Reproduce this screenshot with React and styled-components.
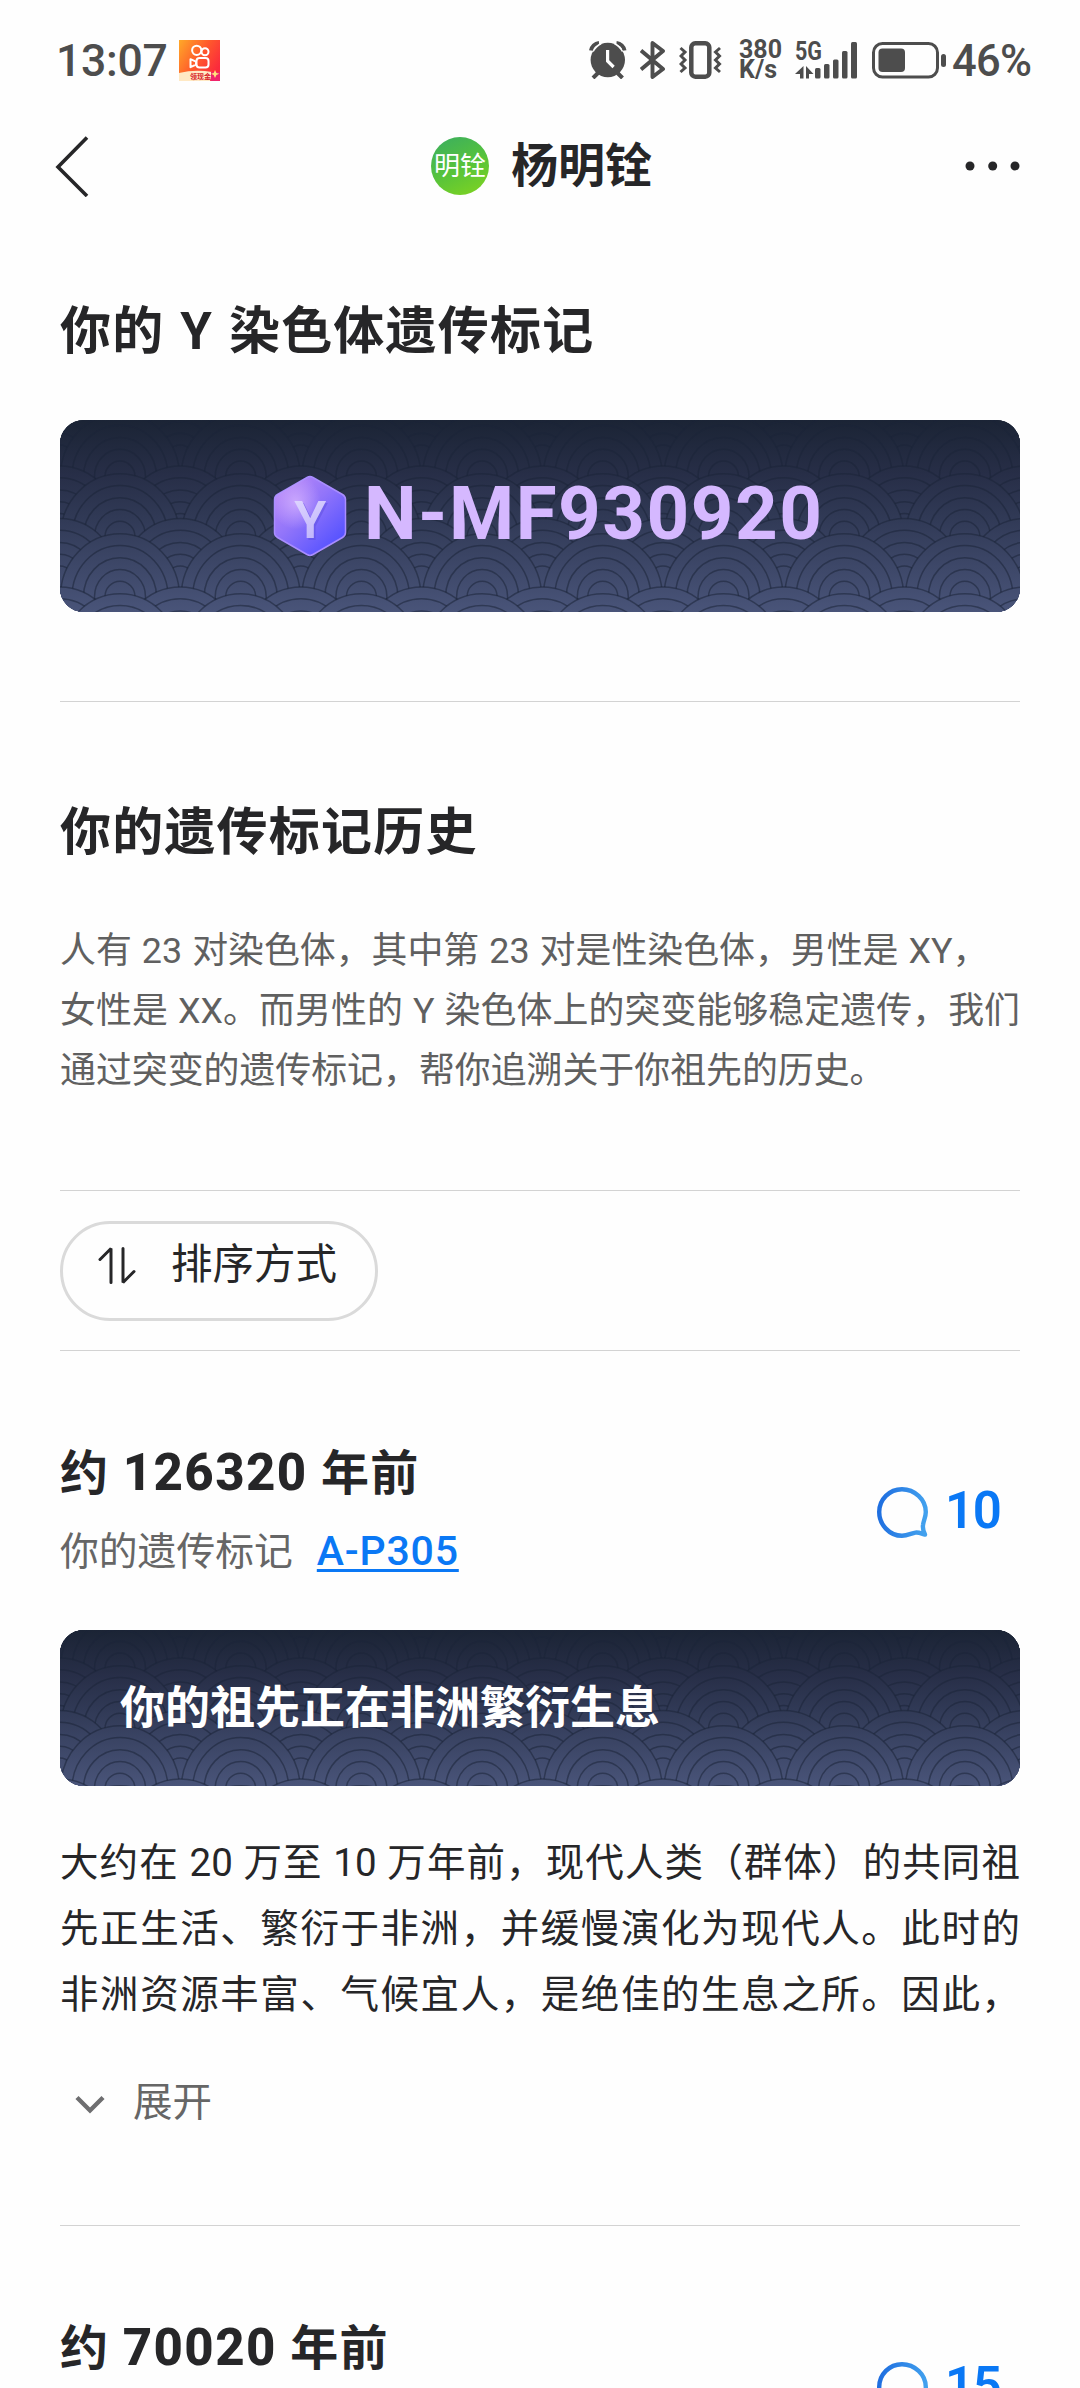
import React from 'react';
import styled, { createGlobalStyle } from 'styled-components';

const GlobalStyle = createGlobalStyle`
  * {
    box-sizing: border-box;
  }
  body {
    margin: 0;
    background: #fefefe;
    color: #262628;
    font-family: Roboto, "Noto Sans CJK SC", sans-serif;
  }
  svg {
    display: block;
    flex: none;
  }
`;

/* ---------- icons ---------- */

const KuaishouIcon = () => (
    <svg width="41" height="41" viewBox="0 0 41 41">
        <defs>
            <linearGradient id="ks" x1="0" y1="0" x2="1" y2="0.6">
                <stop offset="0" stopColor="#ffa928" />
                <stop offset="0.55" stopColor="#ff5a2c" />
                <stop offset="1" stopColor="#fb2a3c" />
            </linearGradient>
        </defs>
        <rect width="41" height="41" fill="url(#ks)" />
        <g fill="none" stroke="#fff" strokeWidth="2">
            <circle cx="17.7" cy="10.3" r="4.6" />
            <circle cx="26" cy="11.7" r="3.5" />
            <rect x="17.5" y="18" width="12" height="9.6" rx="3" />
            <path d="M11.5 19.2v8l5.5-2.6v-3z" strokeLinejoin="round" />
        </g>
        <path d="M0 33q16-4 33-1l-2 9H0z" fill="#ffe9c4" />
        <path d="M32 32h9v9h-9z" fill="#f0246c" />
        <path d="M36 30l1.4 3 3 .8-3 1.2-1.4 3-1.3-3-2.7-1.2 2.7-.8z" fill="#ffe27a" />
        <text x="11" y="39.3" fontSize="7" fontWeight="700" fill="#d8232a">领现金</text>
    </svg>
);

const AlarmIcon = () => (
    <svg width="38" height="38" viewBox="0 0 38 38">
        <circle cx="18.8" cy="19" r="17.2" fill="#4d4d4d" />
        <path d="M9 32l-5 5M28.500 32l5 5" stroke="#4d4d4d" strokeWidth="4" />
        <path d="M2 9.500a9 9 0 0 1 8-7.500M35.500 9.500a9 9 0 0 0-8-7.500" fill="none" stroke="#4d4d4d" strokeWidth="4" />
        <path d="M4.200 10.500a18 18 0 0 1 8-8M33.400 10.500a18 18 0 0 0-8-8" fill="none" stroke="#fefefe" strokeWidth="1.500" />
        <path d="M18.600 9v11l6 6" fill="none" stroke="#fefefe" strokeWidth="3.200" />
    </svg>
);

const BluetoothIcon = () => (
    <svg width="26" height="38" viewBox="0 0 26 38">
        <path d="M1 9.500L23 28 12.500 36V2L23 10 1 28.500" fill="none" stroke="#4d4d4d" strokeWidth="3.900" strokeLinejoin="round" />
    </svg>
);

const VibrateIcon = () => (
    <svg width="43" height="38" viewBox="0 0 43 38">
        <rect x="12.300" y="2.300" width="18" height="33.400" rx="4" fill="none" stroke="#4d4d4d" strokeWidth="4.500" />
        <path d="M1.500 7l4.500 4-4 4 4 4-4 4 4 4-4.500 4M41 7l-4.500 4 4 4-4 4 4 4-4 4 4.500 4" fill="none" stroke="#4d4d4d" strokeWidth="3" />
    </svg>
);

const SignalIcon = () => (
    <svg width="64" height="40" viewBox="0 0 64 40" overflow="visible">
        <text x="0" y="19.500" fontSize="25" fontWeight="700" fill="#4d4d4d" textLength="27" lengthAdjust="spacingAndGlyphs">5G</text>
        <g fill="#4d4d4d">
            <path d="M8.500 26v12.500H5V34H0zM11 26v12.500h3V34h4.500z" />
            <rect x="20" y="28" width="5.500" height="10.500" rx="1.500" />
            <rect x="29" y="24" width="5.500" height="14.500" rx="1.500" />
            <rect x="38" y="19.500" width="5.500" height="19" rx="1.500" />
            <rect x="47" y="11" width="5.500" height="27.500" rx="1.500" />
            <rect x="56" y="2" width="6" height="36.500" rx="1.500" />
        </g>
    </svg>
);

const BatteryIcon = () => (
    <svg width="75" height="37" viewBox="0 0 75 37">
        <rect x="1.500" y="1.500" width="64" height="33.500" rx="9" fill="none" stroke="#4d4d4d" strokeWidth="3" />
        <rect x="6.500" y="6.500" width="26.500" height="23.500" rx="4" fill="#4d4d4d" />
        <rect x="69" y="12" width="5" height="13" rx="2.500" fill="#4d4d4d" />
    </svg>
);

const BackIcon = () => (
    <svg width="40" height="62" viewBox="0 0 40 62">
        <path d="M33 2.500L4 32l29 29" fill="none" stroke="#262628" strokeWidth="3.600" />
    </svg>
);

const MoreIcon = () => (
    <svg width="60" height="12" viewBox="0 0 60 12">
        <circle cx="10" cy="6" r="4.500" fill="#262628" />
        <circle cx="32.700" cy="6" r="4.500" fill="#262628" />
        <circle cx="55" cy="6" r="4.500" fill="#262628" />
    </svg>
);

const SortIcon = () => (
    <svg width="38" height="38" viewBox="0 0 38 38">
        <path d="M2 13.500L13 2.500v34M25 2.500v34l11-11" fill="none" stroke="#262628" strokeWidth="3" strokeLinecap="round" strokeLinejoin="bevel" />
    </svg>
);

const CommentIcon = ({ id }) => (
    <svg width="54" height="54" viewBox="0 0 54 54">
        <defs>
            <linearGradient id={id} x1="0" y1="0.4" x2="1" y2="0.5">
                <stop offset="0" stopColor="#1f6fe0" />
                <stop offset="1" stopColor="#42a1ee" />
            </linearGradient>
        </defs>
        <path
            d="M26 3.200C13.400 3.200 3.200 13.400 3.200 26S13.400 49.800 26 49.800c5.500 0 9.500-2.600 13.500-3.200 3.500-.4 6.500 1.200 9.500 2-1.500-3-2.500-6-2-9.500.5-4.500 2.800-8 2.800-13.100C49.800 13.400 38.600 3.200 26 3.200z"
            fill="none"
            stroke={`url(#${id})`}
            strokeWidth="4.400"
            strokeLinejoin="round"
        />
    </svg>
);

const ChevronIcon = () => (
    <svg width="30" height="20" viewBox="0 0 30 20">
        <path d="M2 2.500l13 13 13-13" fill="none" stroke="#6e6e70" strokeWidth="4.400" />
    </svg>
);

const HexagonIcon = () => (
    <svg width="88" height="96" viewBox="0 0 88 96">
        <defs>
            <linearGradient id="hex" x1="0.1" y1="0.1" x2="0.8" y2="0.9">
                <stop offset="0" stopColor="#b787f8" />
                <stop offset="0.45" stopColor="#9275fa" />
                <stop offset="1" stopColor="#5753ff" />
            </linearGradient>
            <radialGradient id="shine" cx="0.3" cy="0.32" r="0.35">
                <stop offset="0" stopColor="#d3b0ff" stopOpacity="0.8" />
                <stop offset="1" stopColor="#d3b0ff" stopOpacity="0" />
            </radialGradient>
            <linearGradient id="letter" x1="0" y1="0" x2="0.3" y2="1">
                <stop offset="0" stopColor="#e4dbff" />
                <stop offset="1" stopColor="#bdb2fb" />
            </linearGradient>
        </defs>
        <path d="M41 9.500q3-1.800 6 0l29.500 17q3 1.800 3 5v33q0 3.200-3 5l-29.500 17q-3 1.800-6 0l-29.500-17q-3-1.800-3-5v-33q0-3.200 3-5z" fill="url(#hex)" stroke="#a98dff" strokeWidth="1.500" />
        <path d="M41 9.500q3-1.800 6 0l29.500 17q3 1.800 3 5v33q0 3.200-3 5l-29.500 17q-3 1.800-6 0l-29.500-17q-3-1.800-3-5v-33q0-3.200 3-5z" fill="url(#shine)" />
        <text x="46" y="71.500" textAnchor="middle" fontSize="52" fontWeight="600" fill="#5d4fe0" opacity="0.5">Y</text>
        <text x="44.300" y="69.500" textAnchor="middle" fontSize="52" fontWeight="600" fill="url(#letter)">Y</text>
    </svg>
);

/* ---------- wave pattern ---------- */

// The pattern is anchored to the middle of the card, rows go from back to front
const rows = [
    { top: -22.500, odd: true },
    { top: -6.500, odd: false },
    { top: 46, odd: true },
    { top: 53.700, odd: false },
    { top: 98.500, odd: true },
    { top: 113.700, odd: false },
    { top: 167, odd: true },
    { top: 173.700, odd: false },
];

const rings = [
    [59.500, 63],
    [48, 51.300],
    [36.500, 39],
    [25.500, 27.200],
    [15, 15.400],
];

const WavePattern = ({ id, height }) => {
    const shift = (height - 192) / 2;
    return (
        <WaveSvg width="960" height={height} viewBox={`0 0 960 ${height}`}>
            <defs>
                <linearGradient id={id} gradientUnits="userSpaceOnUse" x1="0" y1="0" x2="0" y2={height}>
                    <stop offset="0" stopColor="#1b2435" />
                    <stop offset="0.28" stopColor="#272e47" />
                    <stop offset="0.5" stopColor="#303955" />
                    <stop offset="1" stopColor="#495479" />
                </linearGradient>
            </defs>
            <rect width="960" height={height} fill={`url(#${id})`} />
            {rows.map((row) =>
                Array.from({ length: 10 }, (_, i) => {
                    const cx = (row.odd ? -0.500 : -60.700) + i * 120.700;
                    return rings.map(([rx, ry], n) => (
                        <ellipse
                            key={`${row.top}-${i}-${n}`}
                            cx={cx}
                            cy={row.top + shift + 63}
                            rx={rx}
                            ry={ry}
                            fill={`url(#${id})`}
                            stroke="#1c2438"
                            strokeOpacity="0.55"
                            strokeWidth="1.500"
                        />
                    ));
                })
            )}
        </WaveSvg>
    );
};

/* ---------- page ---------- */

const intro = [
    { text: '人有 23 对染色体，其中第 23 对是性染色体，男性是 XY，' },
    { text: '女性是 XX。而男性的 Y 染色体上的突变能够稳定遗传，我们', justify: true },
    { text: '通过突变的遗传标记，帮你追溯关于你祖先的历史。' },
];

const story = [
    '大约在 20 万至 10 万年前，现代人类（群体）的共同祖',
    '先正生活、繁衍于非洲，并缓慢演化为现代人。此时的',
    '非洲资源丰富、气候宜人，是绝佳的生息之所。因此，',
];

const EntryHeader = ({ id, years, marker, comments }) => (
    <EntryTop>
        <div>
            <EntryTitle>约 <Years>{years}</Years> 年前</EntryTitle>
            {marker && (
                <Marker>
                    你的遗传标记
                    <MarkerLink>{marker}</MarkerLink>
                </Marker>
            )}
        </div>
        <Comments>
            <CommentIcon id={id} />
            <CommentCount>{comments}</CommentCount>
        </Comments>
    </EntryTop>
);

const App = () => {
    return (
        <Page lang="zh-CN">
            <GlobalStyle />

            <StatusBar>
                <Clock>13:07</Clock>
                <KuaishouIcon />
                <StatusIcons>
                    <AlarmIcon />
                    <BluetoothIcon />
                    <VibrateIcon />
                    <Speed>
                        <span>380</span>
                        <span>K/s</span>
                    </Speed>
                    <SignalIcon />
                    <BatteryIcon />
                </StatusIcons>
                <Percent>46%</Percent>
            </StatusBar>

            <NavBar>
                <BackIcon />
                <Profile>
                    <Avatar>明铨</Avatar>
                    <Name>杨明铨</Name>
                </Profile>
                <MoreIcon />
            </NavBar>

            <Content>
                <Heading>你的 Y 染色体遗传标记</Heading>
                <MarkerCard>
                    <WavePattern id="wave-marker" height={192} />
                    <HexagonIcon />
                    <MarkerCode>N-MF930920</MarkerCode>
                </MarkerCard>

                <Divider $top={89} />

                <HistoryHeading>你的遗传标记历史</HistoryHeading>
                <Intro>
                    {intro.map((line) => (
                        <Line key={line.text} $justify={line.justify}>{line.text}</Line>
                    ))}
                </Intro>

                <Divider $top={89} />
                <SortButton>
                    <SortIcon />
                    <span>排序方式</span>
                </SortButton>
                <Divider $top={29} />

                <EntryHeader id="bubble-1" years="126320" marker="A-P305" comments={10} />
                <StoryCard>
                    <WavePattern id="wave-story" height={156} />
                    <StoryTitle>你的祖先正在非洲繁衍生息</StoryTitle>
                </StoryCard>
                <Story>
                    {story.map((line) => (
                        <Line key={line} $justify>{line}</Line>
                    ))}
                </Story>
                <Expand>
                    <ChevronIcon />
                    <ExpandLabel>展开</ExpandLabel>
                </Expand>

                <Divider $top={92} />
                <EntryHeader id="bubble-2" years="70020" comments={15} />
            </Content>
        </Page>
    )
}

const Page = styled.div`
  width: 1080px;
  height: 2388px;
  overflow: hidden;
  background: #fefefe;
`;

const StatusBar = styled.div`
  display: flex;
  align-items: center;
  height: 120px;
  padding: 0 48px 0 56px;
  color: #4d4d4d;
  font-weight: 500;
`;

const Clock = styled.span`
  width: 123px;
  padding-top: 2px;
  font-size: 44.5px;
  letter-spacing: -0.3px;
`;

const StatusIcons = styled.div`
  display: flex;
  align-items: center;
  gap: 13px;
  margin-left: auto;
`;

const Speed = styled.div`
  display: flex;
  flex-direction: column;
  width: 43px;
  margin-left: 4px;
  font-size: 25px;
  font-weight: 700;
  line-height: 20px;
`;

const Percent = styled.span`
  width: 80px;
  margin-left: 5px;
  padding-top: 2px;
  font-size: 43.5px;
  letter-spacing: -0.7px;
`;

const NavBar = styled.div`
  display: grid;
  grid-template-columns: 1fr auto 1fr;
  align-items: center;
  height: 92px;
  padding: 0 60px 0 54px;

  > :last-child {
    justify-self: end;
  }
`;

const Profile = styled.div`
  display: flex;
  align-items: center;
  gap: 22px;
  padding-left: 9px;
`;

const Avatar = styled.div`
  width: 58px;
  height: 58px;
  border-radius: 50%;
  background: linear-gradient(155deg, #3fb15a 10%, #55c23c 50%, #7ed321 95%);
  color: #fff;
  font-size: 26px;
  line-height: 58px;
  text-align: center;
`;

const Name = styled.div`
  font-size: 47px;
  font-weight: 600;
  line-height: 60px;
`;

const Content = styled.div`
  padding: 84px 60px 0;
`;

const Heading = styled.h2`
  margin: 0;
  font-size: 51px;
  font-weight: 700;
  line-height: 72px;
  letter-spacing: 1.2px;
  word-spacing: 2px;
  white-space: nowrap;
`;

const HistoryHeading = styled(Heading)`
  margin-top: 95px;
`;

const Card = styled.div`
  position: relative;
  display: flex;
  align-items: center;
  overflow: hidden;
  border-radius: 24px;
`;

const WaveSvg = styled.svg`
  position: absolute;
  top: 0;
  left: 0;
  z-index: -1;
`;

const MarkerCard = styled(Card)`
  z-index: 0;
  height: 192px;
  margin-top: 52px;
  padding-left: 206px;
`;

const MarkerCode = styled.div`
  margin-left: 10px;
  padding-bottom: 5px;
  color: #d5b8ff;
  font-size: 74.5px;
  font-weight: 700;
  letter-spacing: 1.5px;
  line-height: 100px;
`;

const Divider = styled.div`
  height: 1px;
  margin-top: ${(props) => props.$top}px;
  background: #d3d3d3;
`;

const Line = styled.div`
  white-space: nowrap;
  ${(props) => props.$justify && 'text-align: justify; text-align-last: justify;'}
`;

const Intro = styled.div`
  margin-top: 52px;
  color: #606060;
  font-size: 35.9px;
  line-height: 60px;
  word-spacing: 1.1px;
`;

const SortButton = styled.div`
  display: flex;
  align-items: center;
  gap: 35px;
  width: 318px;
  height: 100px;
  margin-top: 30px;
  padding: 0 0 12px 35px;
  border: 3px solid #dadada;
  border-radius: 50px;
  font-size: 41.5px;
  line-height: 60px;
`;

const EntryTop = styled.div`
  display: flex;
  justify-content: space-between;
  height: 229px;
  padding-top: 87px;
`;

const EntryTitle = styled.div`
  font-size: 48px;
  font-weight: 700;
  line-height: 70px;
  letter-spacing: 1.4px;
  white-space: nowrap;
`;

const Years = styled.span`
  font-size: 51px;
  font-weight: 800;
`;

const Marker = styled.div`
  margin-top: 12px;
  color: #666;
  font-size: 38.8px;
  line-height: 60px;
`;

const MarkerLink = styled.a`
  margin-left: 24px;
  color: #0a78f5;
  font-size: 41px;
  font-weight: 500;
  letter-spacing: 0.8px;
  text-decoration: underline;
  text-decoration-thickness: 3px;
  text-underline-offset: 4px;
`;

const Comments = styled.div`
  display: flex;
  align-items: center;
  width: 144px;
  height: 143px;
  padding-top: 7px;
`;

const CommentCount = styled.span`
  margin: -5px 0 0 15px;
  color: #0a78f5;
  font-size: 51px;
  font-weight: 600;
  letter-spacing: -1.5px;
`;

const StoryCard = styled(Card)`
  z-index: 0;
  height: 156px;
  margin-top: 50px;
  padding: 2px 0 0 60px;
`;

const StoryTitle = styled.div`
  color: #fff;
  font-size: 45px;
  font-weight: 700;
  line-height: 60px;
`;

const Story = styled.div`
  margin-top: 44px;
  font-size: 38.5px;
  line-height: 66px;
`;

const Expand = styled.div`
  display: flex;
  align-items: center;
  gap: 28px;
  height: 60px;
  margin-top: 45px;
  padding: 4px 0 0 15px;
  color: #666;
`;

const ExpandLabel = styled.span`
  margin-top: -4px;
  font-size: 39.5px;
  line-height: 60px;
`;

export default App;
